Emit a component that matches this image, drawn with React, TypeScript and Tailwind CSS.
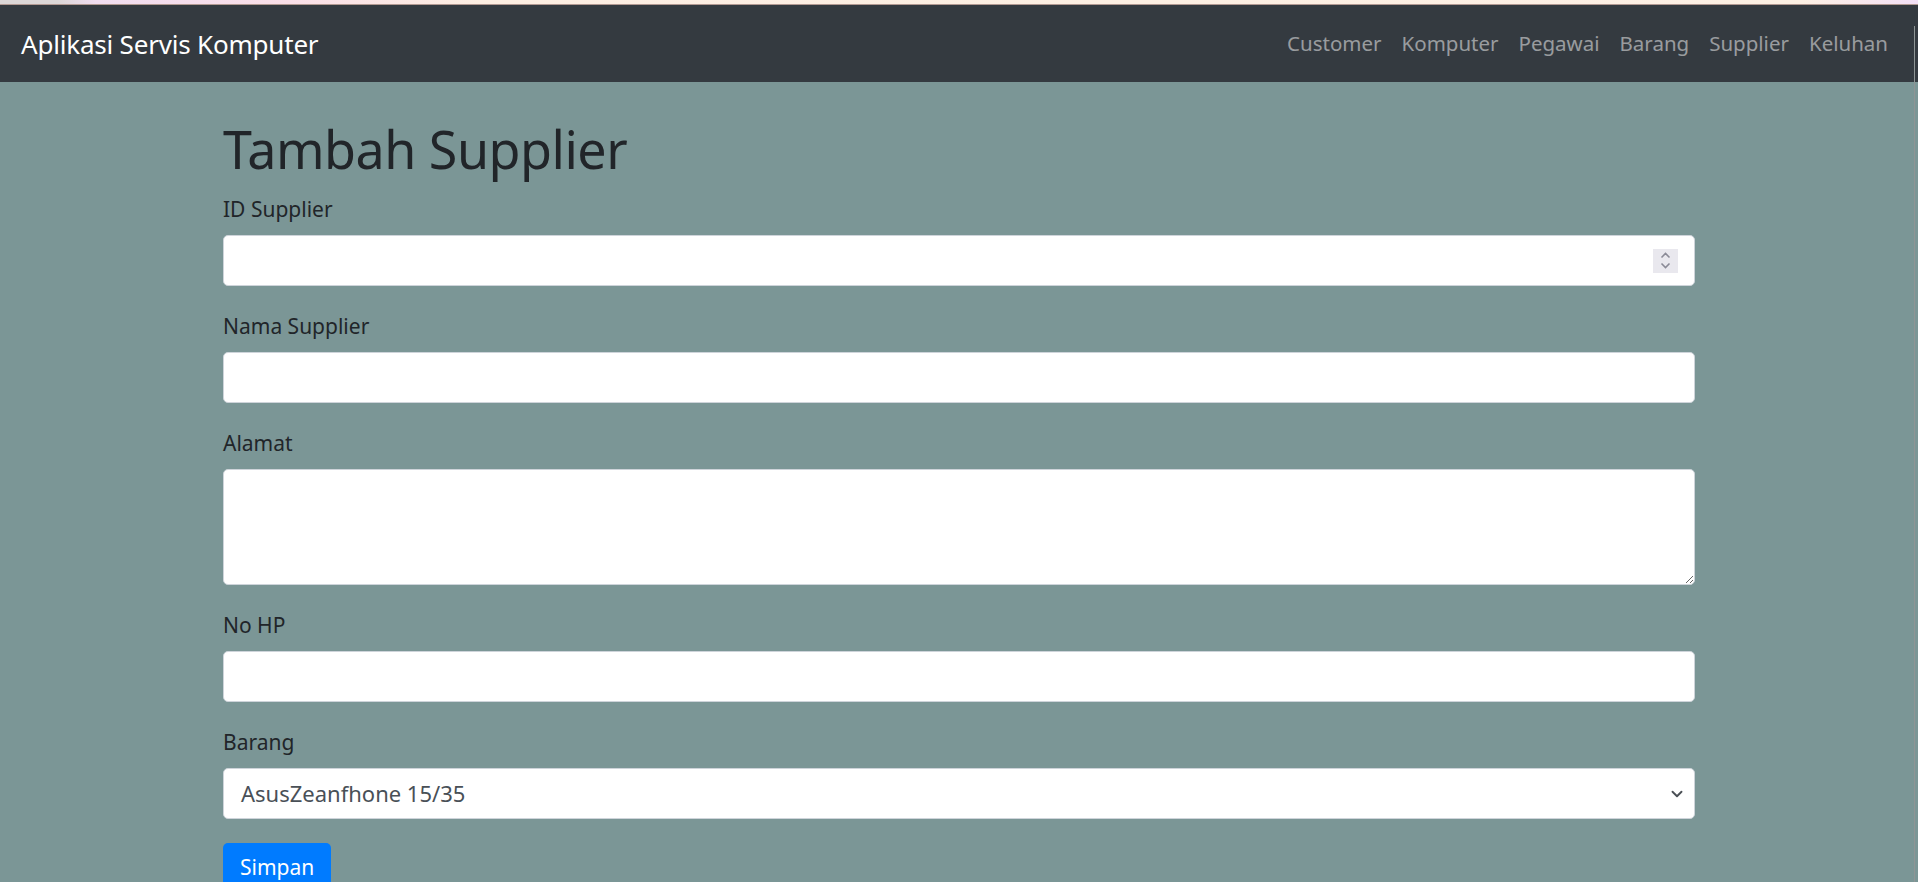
import { ChevronDown } from "lucide-react";

const links = ["Customer", "Komputer", "Pegawai", "Barang", "Supplier", "Keluhan"];

function Label({ children }: { children: React.ReactNode }) {
  return <label className="block text-[21px] leading-[32px] mb-[10px] text-[#212529]">{children}</label>;
}

export default function App() {
  return (
    <div className="relative min-h-[882px] bg-[#7b9696] font-['Noto_Sans',sans-serif] overflow-hidden">
      {/* browser strip */}
      <div className="h-[5px] bg-[linear-gradient(to_right,#dcd7d7_0%,#dcd7d7_3%,#f1ddf0_5%,#fadfe8_15%,#fdeee2_25%,#fdf0e4_94%,#f3e0f6_100%)] border-b border-[#b39a93]" />

      {/* Navbar */}
      <nav className="h-[77px] bg-[#343a40] flex items-center justify-between pl-[21px] pr-[20px]">
        <span className="text-[26px] text-white leading-none tracking-[-0.2px]">Aplikasi Servis Komputer</span>
        <div className="flex items-center">
          {links.map((l) => (
            <span key={l} className="px-[10px] text-[20.5px] text-white/50">{l}</span>
          ))}
        </div>
      </nav>

      {/* Form */}
      <main className="w-[1472px] mx-auto pt-[35px]">
        <h1 className="text-[52px] leading-[64px] mb-[12px] text-[#212529] tracking-[-0.5px]">Tambah Supplier</h1>

        <div className="mb-[24px]">
          <Label>ID Supplier</Label>
          <div className="h-[51px] bg-white border border-[#ced4da] rounded-[5px] flex items-center pr-[16px]">
            <input type="text" className="flex-1 h-full px-[16px] outline-none bg-transparent" />
            <svg width="25" height="24" viewBox="0 0 25 24" className="shrink-0">
              <rect width="25" height="24" fill="#e9e8ee" />
              <polyline points="8.5,8.5 12.5,4.5 16.5,8.5" fill="none" stroke="#8a8a96" strokeWidth="1.6" />
              <polyline points="8.5,14.5 12.5,18.5 16.5,14.5" fill="none" stroke="#8a8a96" strokeWidth="1.6" />
            </svg>
          </div>
        </div>

        <div className="mb-[24px]">
          <Label>Nama Supplier</Label>
          <input type="text" className="block w-full h-[51px] bg-white border border-[#ced4da] rounded-[5px] px-[16px] outline-none" />
        </div>

        <div className="mb-[24px]">
          <Label>Alamat</Label>
          <textarea rows={3} className="block w-full h-[116px] bg-white border border-[#ced4da] rounded-[5px] px-[16px] py-[8px] outline-none" />
        </div>

        <div className="mb-[24px]">
          <Label>No HP</Label>
          <input type="text" className="block w-full h-[51px] bg-white border border-[#ced4da] rounded-[5px] px-[16px] outline-none" />
        </div>

        <div className="mb-[24px]">
          <Label>Barang</Label>
          <div className="h-[51px] bg-white border border-[#ced4da] rounded-[5px] flex items-center justify-between pl-[17px] pr-[8px]">
            <span className="text-[22px] text-[#495057]">AsusZeanfhone 15/35</span>
            <ChevronDown size={18} strokeWidth={2.5} className="text-[#4a4f55]" />
          </div>
        </div>

        <button className="h-[50px] px-[17px] bg-[#007bff] rounded-[5px] text-white text-[21px]">Simpan</button>
      </main>

      {/* window edge */}
      <div className="absolute right-[3px] top-[26px] bottom-0 w-[1px] bg-[#8f9595]" />
    </div>
  );
}
